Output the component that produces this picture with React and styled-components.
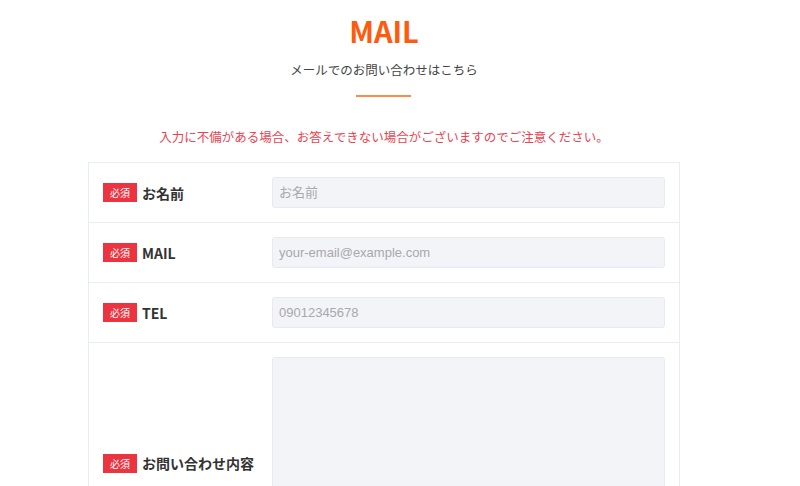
import styled, { createGlobalStyle } from 'styled-components';

const GlobalStyle = createGlobalStyle`
  html, body {
    margin: 0;
    padding: 0;
    background: #fff;
    overflow: hidden;
  }
  body {
    font-family: "Noto Sans CJK JP", "Noto Sans", sans-serif;
    color: #333;
  }
`;

const fields = [
  { label: 'お名前', placeholder: 'お名前', type: 'text' },
  { label: 'MAIL', placeholder: 'your-email@example.com', type: 'email' },
  { label: 'TEL', placeholder: '09012345678', type: 'tel' },
];

const App = () => {
  return (
    <Page>
      <GlobalStyle />
      <Heading>
        <h1>MAIL</h1>
        <p>メールでのお問い合わせはこちら</p>
        <Rule />
      </Heading>
      <Notice>入力に不備がある場合、お答えできない場合がございますのでご注意ください。</Notice>
      <Form>
        {fields.map((f) => (
          <Row key={f.label}>
            <Label>
              <Badge>必須</Badge>
              {f.label}
            </Label>
            <Input type={f.type} placeholder={f.placeholder} />
          </Row>
        ))}
        <Row>
          <Label>
            <Badge>必須</Badge>
            お問い合わせ内容
          </Label>
          <TextArea />
        </Row>
      </Form>
    </Page>
  );
};

const Page = styled.main`
  width: 768px;
  display: flex;
  flex-direction: column;
  align-items: center;
  padding-top: 11px;
`;

const Heading = styled.header`
  display: flex;
  flex-direction: column;
  align-items: center;
  h1 {
    margin: 0;
    font-size: 29px;
    line-height: 38px;
    font-weight: 700;
    color: #ff5a0d;
  }
  p {
    margin: 11px 0 0;
    font-size: 12.5px;
    line-height: 20px;
    color: #444;
  }
`;

const Rule = styled.span`
  display: block;
  width: 55px;
  height: 2px;
  background: #ff8a4c;
  margin-top: 15px;
`;

const Notice = styled.p`
  margin: 31px 0 0;
  font-size: 12.5px;
  line-height: 18px;
  color: #ea4250;
`;

const Form = styled.form`
  width: 592px;
  margin-top: 16px;
  border: 1px solid #e8edf5;
  border-bottom: none;
  box-sizing: border-box;
`;

const Row = styled.div`
  display: grid;
  grid-template-columns: 169px 1fr;
  align-items: center;
  padding: 14px;
  border-bottom: 1px solid #e8edf5;
`;

const Label = styled.label`
  display: flex;
  align-items: center;
  gap: 5px;
  font-size: 14px;
  font-weight: 700;
  color: #333;
`;

const Badge = styled.span`
  display: inline-flex;
  align-items: center;
  justify-content: center;
  width: 34px;
  height: 19px;
  background: #eb3440;
  color: #fff;
  font-size: 10px;
  font-weight: 400;
`;

const Input = styled.input`
  box-sizing: border-box;
  width: 393px;
  height: 31px;
  padding: 0 6px;
  border: 1px solid #e6eaf2;
  border-radius: 3px;
  background: #f3f4f8;
  font-family: "Liberation Sans", "Noto Sans CJK JP", sans-serif;
  font-size: 13px;
  color: #333;
  outline: none;
  &::placeholder {
    color: #a8a8ad;
  }
`;

const TextArea = styled.textarea`
  box-sizing: border-box;
  width: 393px;
  height: 212px;
  padding: 6px;
  border: 1px solid #e6eaf2;
  border-radius: 3px;
  background: #f3f4f8;
  resize: none;
  outline: none;
`;

export default App;
